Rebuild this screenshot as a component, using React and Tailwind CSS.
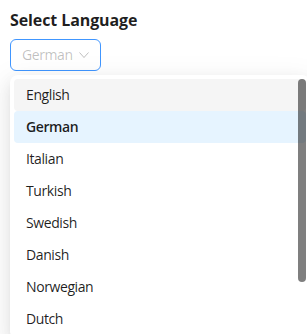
import React from "react";

const languages = ["English", "German", "Italian", "Turkish", "Swedish", "Danish", "Norwegian", "Dutch"];

const DownIcon = () => (
  <svg viewBox="0 0 10 6" className="w-[10px] h-[6px]" fill="none" stroke="currentColor" strokeWidth="1">
    <polyline points="0.5,0.5 5,5.5 9.5,0.5" />
  </svg>
);

const App = () => {
  return (
    <div className="relative w-[307px] h-[334px] overflow-hidden bg-white font-['Open_Sans',sans-serif] text-[rgba(0,0,0,0.88)]">
      <div className="pl-[10px] pt-[8px]">
        <h2 className="text-base leading-6 font-bold tracking-[-0.1px]">Select Language</h2>
        <div className="mt-[7px] w-[91px] h-8 flex items-center gap-[6px] pl-[11px] rounded-md border border-[#4096ff] text-sm tracking-[-0.4px] text-[rgba(0,0,0,0.25)]">
          <span>German</span>
          <DownIcon />
        </div>
      </div>

      <div className="absolute left-[10px] top-[75px] w-[300px] p-1 rounded-lg bg-white shadow-[0_6px_16px_0_rgba(0,0,0,0.08),0_3px_6px_-4px_rgba(0,0,0,0.12),0_9px_28px_8px_rgba(0,0,0,0.05)]">
        <div className="relative">
          {languages.map((lang) => (
            <div
              key={lang}
              className={
                "h-8 flex items-center px-3 rounded text-sm tracking-[-0.4px] " +
                (lang === "English" ? "bg-[#f5f5f5] " : "") +
                (lang === "German" ? "bg-[#e6f4ff] font-semibold" : "")
              }
            >
              {lang}
            </div>
          ))}
          <div className="absolute right-0 top-0 w-2 h-[203px] rounded-full bg-[rgba(0,0,0,0.5)]" />
        </div>
      </div>
    </div>
  );
};

export default App;
